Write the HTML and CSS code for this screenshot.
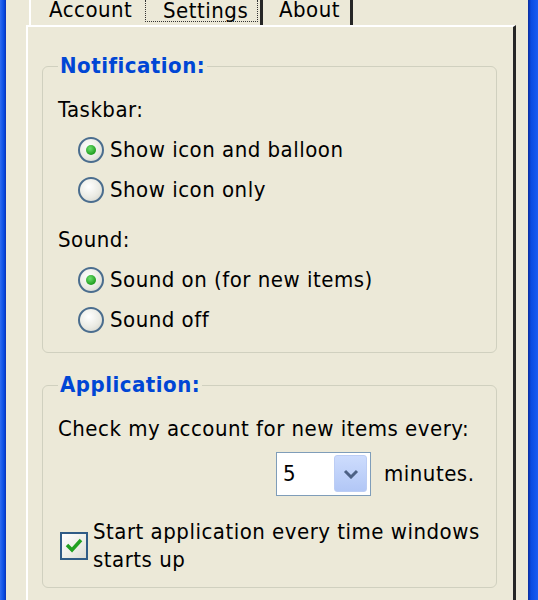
FILE: index.html
```html
<!DOCTYPE html>
<html lang="en">
<head>
  <meta charset="UTF-8" />
  <meta name="viewport" content="width=device-width, initial-scale=1.0" />
  <title>Settings</title>
  <link rel="stylesheet" href="styles.css">
</head>
<body>
  <div class="window">
    <div class="frame-left"></div>
    <div class="dialog">
      <div class="tabs">
        <div class="tab tab-account">Account</div>
        <div class="tab tab-settings"><span class="focus">Settings</span></div>
        <div class="tab tab-about">About</div>
      </div>
      <div class="panel">
        <fieldset class="group">
          <legend>Notification:</legend>
          <div class="label">Taskbar:</div>
          <div class="option first"><span class="radio checked"></span>Show icon and balloon</div>
          <div class="option"><span class="radio"></span>Show icon only</div>
          <div class="label sub">Sound:</div>
          <div class="option first"><span class="radio checked"></span>Sound on (for new items)</div>
          <div class="option"><span class="radio"></span>Sound off</div>
        </fieldset>
        <fieldset class="group group-app">
          <legend>Application:</legend>
          <div class="label">Check my account for new items every:</div>
          <div class="interval">
            <div class="combo">
              <span class="combo-value">5</span>
              <span class="combo-btn">
                <svg width="16" height="10" viewBox="0 0 16 10"><polyline points="2,2 8,8 14,2" fill="none" stroke="#4d6185" stroke-width="3" /></svg>
              </span>
            </div>
            <span class="unit">minutes.</span>
          </div>
          <div class="check-row">
            <span class="checkbox">
              <svg width="20" height="18" viewBox="0 0 20 18"><polyline points="3,8 8,13 17,3" fill="none" stroke="#21a121" stroke-width="3.5" /></svg>
            </span>
            <span class="check-text">Start application every time windows<br>starts up</span>
          </div>
        </fieldset>
      </div>
    </div>
    <div class="frame-right"></div>
  </div>
</body>
</html>
```

FILE: styles.css
```css
body {
  margin: 0;
  background-color: #ece9d8;
  font-family: "DejaVu Sans Condensed", "DejaVu Sans", sans-serif;
  font-size: 22px;
  letter-spacing: 0.5px;
  color: #000;
}
.window {
  display: flex;
  height: 600px;
  overflow: hidden;
}
.frame-left {
  width: 6px;
  background: linear-gradient(to right, #2f6cf0, #0a4ee4 60%, #0833b8);
}
.frame-right {
  width: 10px;
  background: linear-gradient(to right, #0a2c9c, #0b4be2 30%, #1a5cf2);
}
.dialog {
  flex: 1;
  display: flex;
  flex-direction: column;
  padding: 0 12px 0 20px;
}
.tabs {
  display: flex;
  height: 25px;
  padding-left: 3px;
}
.tab {
  box-sizing: border-box;
  line-height: 20px;
  white-space: nowrap;
}
.tab-account {
  width: 109px;
  padding-left: 18px;
  border-left: 2px solid #fff;
}
.tab-settings {
  width: 125px;
  padding-left: 7px;
  border-right: 3px solid #262626;
}
.tab-about {
  width: 90px;
  padding-left: 16px;
  border-right: 3px solid #262626;
}
.focus {
  display: inline-block;
  line-height: 21px;
  padding: 0 9px 0 17px;
  border: 1px dotted #333;
  border-top: none;
}
.panel {
  flex: 1;
  border-top: 2px solid #fff;
  border-left: 2px solid #fff;
  border-right: 3px solid #262626;
  padding: 26px 16px 0 14px;
}
.group {
  margin: 0;
  border: 1px solid #d0d0bf;
  border-radius: 6px;
  padding: 18px 15px 12px 15px;
}
.group legend {
  padding: 0 2px;
  line-height: 26px;
  font-weight: bold;
  color: #0046d5;
}
.group-app {
  margin-top: 19px;
  padding-bottom: 13px;
}
.label {
  line-height: 26px;
}
.label.sub {
  margin-top: 17px;
}
.option {
  display: flex;
  align-items: center;
  height: 40px;
  line-height: 26px;
  padding-left: 20px;
}
.option.first {
  margin-top: 7px;
}
.radio {
  position: relative;
  width: 22px;
  height: 22px;
  margin-right: 6px;
  border: 2px solid #4a6d8e;
  border-radius: 50%;
  background: radial-gradient(circle at 40% 35%, #ffffff, #ebebe4 55%, #cfcfc6);
}
.radio.checked::after {
  content: "";
  position: absolute;
  left: 6px;
  top: 6px;
  width: 10px;
  height: 10px;
  border-radius: 50%;
  background: radial-gradient(circle at 40% 35%, #6fe06f, #1f9e1f 70%);
}
.interval {
  display: flex;
  align-items: center;
  margin-top: 10px;
  padding-left: 218px;
  line-height: 26px;
}
.combo {
  box-sizing: border-box;
  display: flex;
  align-items: center;
  justify-content: space-between;
  width: 95px;
  height: 44px;
  padding: 2px 3px 3px 6px;
  border: 1px solid #7f9db9;
  background: #fff;
}
.combo-btn {
  box-sizing: border-box;
  display: flex;
  align-items: center;
  justify-content: center;
  width: 33px;
  height: 37px;
  border: 1px solid #bccdf4;
  border-radius: 3px;
  background: linear-gradient(#cddcfd, #b2c7f6);
}
.unit {
  margin-left: 13px;
}
.check-row {
  display: flex;
  align-items: center;
  margin-top: 22px;
  padding-left: 2px;
}
.checkbox {
  box-sizing: border-box;
  display: flex;
  align-items: center;
  justify-content: center;
  width: 28px;
  height: 28px;
  margin-right: 5px;
  border: 2px solid #2f5b86;
  background: linear-gradient(135deg, #ffffff, #ecece5 60%, #dcdcd3);
}
.check-text {
  line-height: 28px;
}
```
